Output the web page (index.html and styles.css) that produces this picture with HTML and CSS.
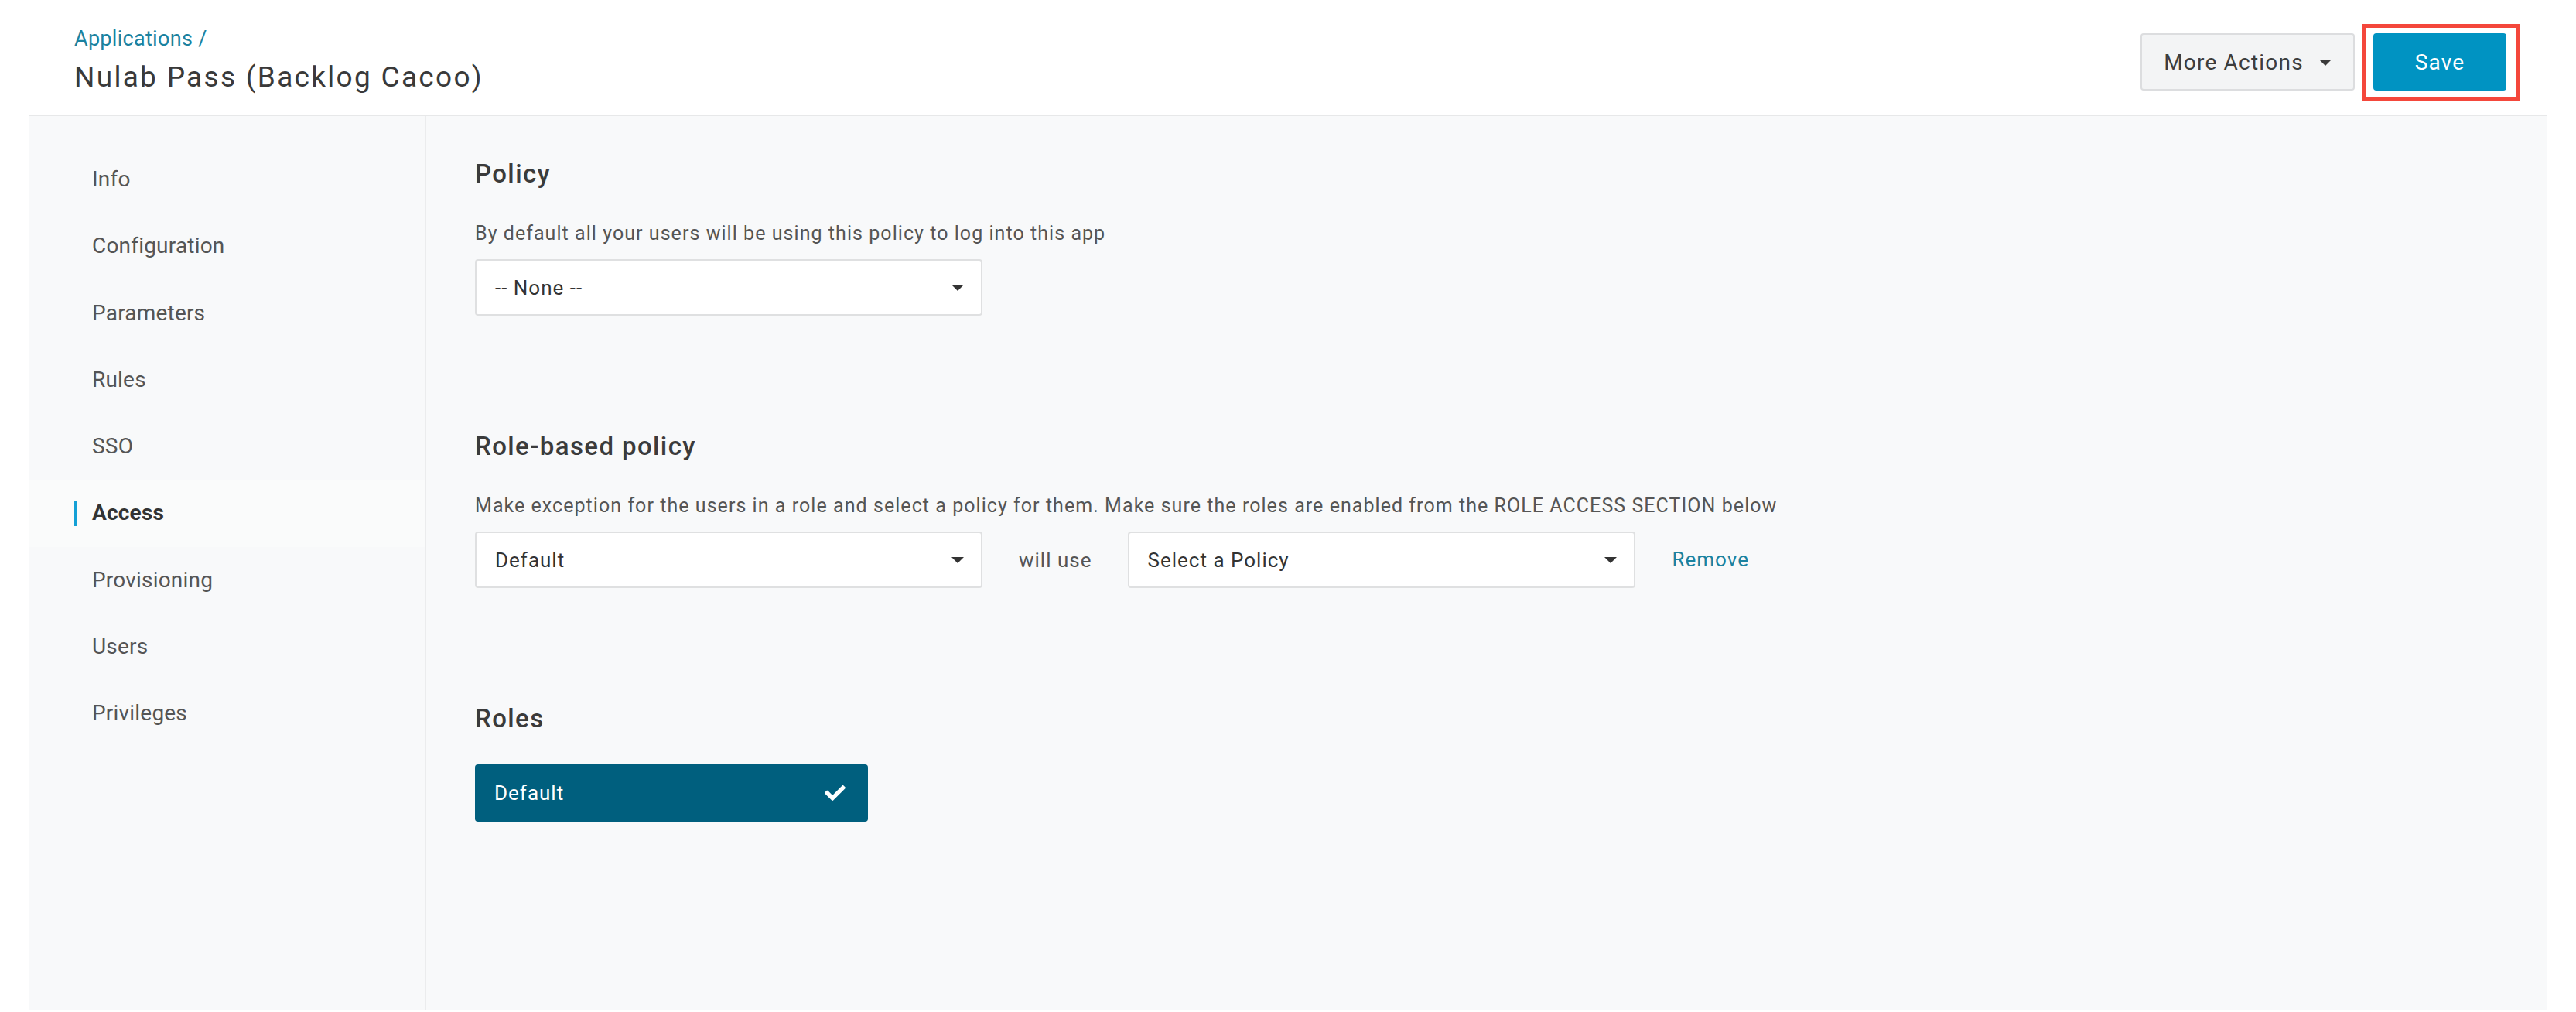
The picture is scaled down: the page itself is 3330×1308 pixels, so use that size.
FILE: index.html
```html
<!DOCTYPE html>
<html lang="en">
<head>
<meta charset="utf-8">
<title>Nulab Pass (Backlog Cacoo) - Access</title>
<link rel="stylesheet" href="styles.css">
</head>
<body>
<header class="page-header">
  <div class="title-block">
    <a class="breadcrumb" href="#">Applications /</a>
    <h1 class="page-title">Nulab Pass (Backlog Cacoo)</h1>
  </div>
  <div class="header-actions">
    <button class="btn btn-secondary" type="button">More Actions
      <svg class="caret" viewBox="0 0 16 8" width="16" height="8"><polygon points="0,0 16,0 8,8"/></svg>
    </button>
    <div class="highlight-wrap">
      <button class="btn btn-primary" type="button">Save</button>
    </div>
  </div>
</header>

<div class="panel">
  <nav class="sidebar">
    <a class="nav-item" href="#">Info</a>
    <a class="nav-item" href="#">Configuration</a>
    <a class="nav-item" href="#">Parameters</a>
    <a class="nav-item" href="#">Rules</a>
    <a class="nav-item" href="#">SSO</a>
    <a class="nav-item active" href="#">Access</a>
    <a class="nav-item" href="#">Provisioning</a>
    <a class="nav-item" href="#">Users</a>
    <a class="nav-item" href="#">Privileges</a>
  </nav>

  <main class="content">
    <section class="section">
      <h2 class="section-title">Policy</h2>
      <p class="section-desc">By default all your users will be using this policy to log into this app</p>
      <div class="select">
        <span class="select-value">-- None --</span>
        <svg class="caret" viewBox="0 0 16 8" width="16" height="8"><polygon points="0,0 16,0 8,8"/></svg>
      </div>
    </section>

    <section class="section">
      <h2 class="section-title">Role-based policy</h2>
      <p class="section-desc">Make exception for the users in a role and select a policy for them. Make sure the roles are enabled from the ROLE ACCESS SECTION below</p>
      <div class="rule-row">
        <div class="select">
          <span class="select-value">Default</span>
          <svg class="caret" viewBox="0 0 16 8" width="16" height="8"><polygon points="0,0 16,0 8,8"/></svg>
        </div>
        <span class="will-use">will use</span>
        <div class="select">
          <span class="select-value">Select a Policy</span>
          <svg class="caret" viewBox="0 0 16 8" width="16" height="8"><polygon points="0,0 16,0 8,8"/></svg>
        </div>
        <a class="remove-link" href="#">Remove</a>
      </div>
    </section>

    <section class="section">
      <h2 class="section-title">Roles</h2>
      <div class="role-chip">
        <span>Default</span>
        <svg class="check" viewBox="0 64 512 384" width="27" height="20"><path d="M173.898 439.404l-166.4-166.4c-9.997-9.997-9.997-26.206 0-36.204l36.203-36.204c9.997-9.998 26.207-9.998 36.204 0L192 312.69 432.095 72.596c9.997-9.997 26.207-9.997 36.204 0l36.203 36.204c9.997 9.997 9.997 26.206 0 36.204l-294.4 294.401c-9.998 9.997-26.207 9.997-36.204-.001z"/></svg>
      </div>
    </section>
  </main>
</div>
</body>
</html>
```

FILE: styles.css
```css
* { box-sizing: border-box; }

html, body {
  margin: 0;
  padding: 0;
  background: #ffffff;
  font-family: Roboto, "Liberation Sans", Arial, sans-serif;
  color: #333333;
}

body { min-height: 1308px; }

/* ---------- Header ---------- */
.page-header {
  height: 148px;
  display: flex;
  justify-content: space-between;
  align-items: flex-start;
  padding: 34px 90px 0 96px;
}

.title-block {
  display: flex;
  flex-direction: column;
}

.breadcrumb {
  font-size: 27px;
  line-height: 32px;
  color: #1a82a0;
  text-decoration: none;
  letter-spacing: 0.3px;
}

.page-title {
  margin: 12px 0 0 0;
  font-size: 37px;
  line-height: 44px;
  font-weight: 400;
  color: #3a3a3a;
  letter-spacing: 2.3px;
}

.header-actions {
  display: flex;
  align-items: center;
  gap: 24px;
  padding-top: 9px;
}

.btn {
  height: 74px;
  border-radius: 4px;
  font-family: Roboto, "Liberation Sans", Arial, sans-serif;
  font-size: 28px;
  letter-spacing: 1.2px;
  cursor: pointer;
  display: flex;
  align-items: center;
  justify-content: center;
}

.btn-secondary {
  width: 277px;
  background: #f3f4f5;
  border: 2px solid #dcdddf;
  color: #3d3d3d;
  gap: 20px;
}

.btn-secondary .caret { fill: #3a3a3a; margin-top: 1px; }

.btn-primary {
  width: 172px;
  background: #0093c2;
  border: none;
  color: #ffffff;
}

.highlight-wrap { position: relative; }

.highlight-wrap::after {
  content: "";
  position: absolute;
  top: -12px;
  left: -15px;
  right: -17px;
  bottom: -14px;
  border: 5px solid #f4473b;
  pointer-events: none;
}

/* ---------- Panel ---------- */
.panel {
  margin: 0 38px;
  border-top: 2px solid #e7e8e9;
  background: #f8f9fa;
  display: flex;
  min-height: 1158px;
}

.sidebar {
  width: 513px;
  flex: none;
  border-right: 1px solid #ebeced;
  padding-top: 39px;
  display: flex;
  flex-direction: column;
}

.nav-item {
  position: relative;
  display: block;
  height: 86.3px;
  line-height: 86px;
  padding-left: 81px;
  font-size: 28px;
  color: #555555;
  text-decoration: none;
  letter-spacing: 0.2px;
}

.nav-item.active {
  font-weight: 700;
  color: #333333;
  background: #fafbfb;
}

.nav-item.active::before {
  content: "";
  position: absolute;
  left: 58px;
  top: 28px;
  width: 4px;
  height: 32px;
  background: #14a0d6;
}

/* ---------- Content ---------- */
.content {
  flex: 1;
  padding: 55px 0 0 63px;
}

.section { margin-bottom: 149px; }

.section-title {
  margin: 0;
  font-size: 33px;
  line-height: 40px;
  font-weight: 500;
  color: #3b3b3b;
  letter-spacing: 1.4px;
}

.section-desc {
  margin: 39px 0 15px 0;
  font-size: 25px;
  line-height: 36px;
  color: #555555;
  letter-spacing: 1.05px;
}

.select {
  width: 656px;
  height: 73px;
  background: #ffffff;
  border: 2px solid #dfe0e1;
  border-radius: 4px;
  display: flex;
  align-items: center;
  justify-content: space-between;
  padding: 0 22px 0 24px;
}

.select-value {
  font-size: 26px;
  color: #333333;
  letter-spacing: 1px;
}

.select .caret { fill: #333333; }

.rule-row {
  display: flex;
  align-items: center;
}

.will-use {
  margin: 0 46px 0 47px;
  font-size: 26px;
  color: #555555;
  letter-spacing: 1px;
}

.rule-row .remove-link { margin-left: 48px; }

.remove-link {
  font-size: 26px;
  color: #1a82a0;
  text-decoration: none;
  letter-spacing: 1px;
  margin-top: -2px;
}

.role-chip {
  margin-top: 39px;
  width: 508px;
  height: 74px;
  background: #005f7e;
  border-radius: 4px;
  display: flex;
  align-items: center;
  justify-content: space-between;
  padding: 0 29px 0 25px;
  color: #ffffff;
  font-size: 26px;
  letter-spacing: 1px;
}

.check { fill: #ffffff; }
```
